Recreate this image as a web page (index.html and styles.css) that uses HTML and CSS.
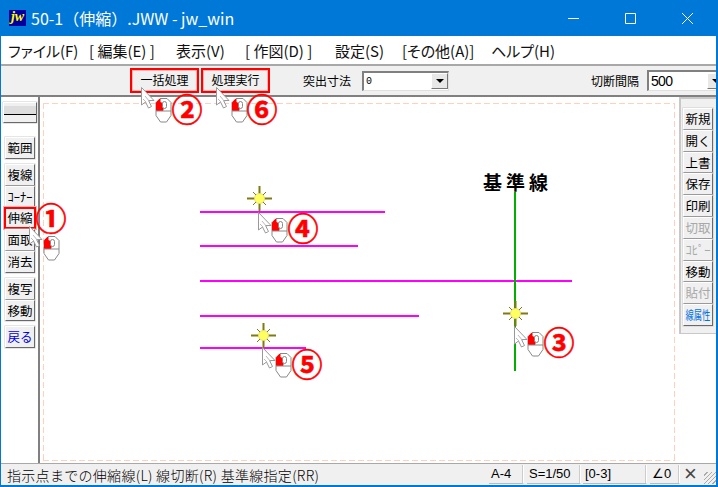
FILE: index.html
```html
<html lang="en">
<head>
    <meta charset="UTF-8">
    <title>50-1（伸縮）.JWW - jw_win</title>
    <link rel="stylesheet" href="styles.css">
</head>
<body>
    <div class="window">
        <div class="titlebar">
            <span class="app-icon">jw</span>
            <span class="title">50-1（伸縮）.JWW - jw_win</span>
            <div class="win-btns">
                <svg width="57" height="36" viewBox="0 0 57 36"><path d="M23 18.500h11" stroke="#fff" fill="none"/></svg>
                <svg width="57" height="36" viewBox="0 0 57 36"><path d="M23.500 13.500h10v10h-10z" stroke="#fff" fill="none"/></svg>
                <svg width="57" height="36" viewBox="0 0 57 36"><path d="M23 13l11 11M34 13l-11 11" stroke="#fff" fill="none"/></svg>
            </div>
        </div>
        <div class="menubar">
            <span class="m1">ファイル(F)</span>
            <span class="m2">[ 編集(E) ]</span>
            <span class="m3">表示(V)</span>
            <span class="m4">[ 作図(D) ]</span>
            <span class="m5">設定(S)</span>
            <span class="m6">[その他(A)]</span>
            <span class="m7">ヘルプ(H)</span>
        </div>
        <div class="toolbar">
            <div class="tool-btn first">一括処理</div>
            <div class="tool-btn">処理実行</div>
            <span class="tool-lbl lbl1">突出寸法</span>
            <div class="combo small"><span>0</span><i class="arrow"></i></div>
            <span class="tool-lbl lbl2">切断間隔</span>
            <div class="combo big"><span>500</span><i class="arrow"></i></div>
        </div>
        <div class="main">
            <div class="left-col">
                <div class="btn line-btn"><i></i></div>
                <div class="btn gap1">範囲</div>
                <div class="btn gap2">複線</div>
                <div class="btn">ｺｰﾅｰ</div>
                <div class="btn active">伸縮</div>
                <div class="btn">面取</div>
                <div class="btn">消去</div>
                <div class="btn gap2">複写</div>
                <div class="btn">移動</div>
                <div class="btn gap2 blue">戻る</div>
            </div>
            <div class="canvas"><div class="dashes"></div></div>
            <div class="right-col">
                <div class="right-btns">
                    <div class="btn">新規</div>
                    <div class="btn">開く</div>
                    <div class="btn">上書</div>
                    <div class="btn">保存</div>
                    <div class="btn">印刷</div>
                    <div class="btn off">切取</div>
                    <div class="btn off">ｺﾋﾟｰ</div>
                    <div class="btn">移動</div>
                    <div class="btn off">貼付</div>
                    <div class="btn blue2"><span class="squeeze">線属性</span></div>
                </div>
            </div>
        </div>
        <div class="statusbar">
            <span class="status-msg">指示点までの伸縮線(L) 線切断(R) 基準線指定(RR)</span>
            <span class="cell c1">A-4</span>
            <span class="cell c2">S=1/50</span>
            <span class="cell c3">[0-3]</span>
            <span class="cell c4">∠0</span>
            <span class="cell c5">×</span>
        </div>

        <!-- drawing and the step marks sit over everything -->
        <svg class="marks" width="718" height="487" viewBox="0 0 718 487">
            <defs>
                <g id="cursor">
                    <path d="M0.500 0.500V18l4-3 3 6 3-1.500-3-6h5.500z" fill="#fff" stroke="#999"/>
                    <path d="M4 9l5 6M2 12l3 3" stroke="#bbb" fill="none"/>
                </g>
                <g id="mouse">
                    <path d="M5 .5h7l4 4v13l-4.500 6.500h-6L1 17.500v-13z" fill="#fff" stroke="#888"/>
                    <path d="M5 1v3.500l3 1v7H1.500v-8z" fill="#f00" stroke="#f00"/>
                    <path d="M1 13h15" stroke="#888"/>
                    <rect x="7.500" y="3.500" width="4" height="7" rx="2" fill="#fff" stroke="#888"/>
                </g>
                <g id="spark">
                    <path d="M-12 .5H13M.5-12V13" stroke="#807a10" stroke-width="2"/>
                    <path d="M-6-6L7 7M7-6L-6 7" stroke="#807a10"/>
                    <circle cx=".5" cy=".5" r="5" fill="#ffff60" stroke="#e8e070"/>
                </g>
            </defs>
            <path class="pink" d="M200 212h185M200 246h158M200 281h372M200 316h219M200 348h106"/>
            <path class="green" d="M515 192v179"/>
            <text class="kijun" x="483" y="190">基準線</text>
            <use href="#spark" x="259" y="198"/>
            <use href="#spark" x="515" y="313"/>
            <use href="#spark" x="263" y="335"/>
            <use href="#cursor" x="141" y="87"/>
            <use href="#cursor" x="216" y="87"/>
            <use href="#cursor" x="29" y="226"/>
            <use href="#cursor" x="258" y="212"/>
            <use href="#cursor" x="514" y="326"/>
            <use href="#cursor" x="262" y="347"/>
            <use href="#mouse" x="155" y="98"/>
            <use href="#mouse" x="231" y="98"/>
            <use href="#mouse" x="43" y="236"/>
            <use href="#mouse" x="271" y="218"/>
            <use href="#mouse" x="527" y="332"/>
            <use href="#mouse" x="275" y="353"/>
            <text class="num" x="187" y="121">②</text>
            <text class="num" x="262" y="121">⑥</text>
            <text class="num" x="51" y="230">①</text>
            <text class="num" x="303" y="240">④</text>
            <text class="num" x="559" y="354">③</text>
            <text class="num" x="307" y="376">⑤</text>
        </svg>
    </div>
</body>
</html>
```

FILE: styles.css
```css
* {
    box-sizing: border-box;
    margin: 0;
}
body {
    background: #fff;
    font-family: "Noto Sans CJK JP", "Noto Sans", sans-serif;
    overflow: hidden;
}
.window {
    position: relative;
    width: 718px;
    height: 487px;
    display: flex;
    flex-direction: column;
    border: solid #0078d7;
    border-width: 0 2px 2px 1px;
    overflow: hidden;
}
.titlebar {
    height: 36px;
    flex: none;
    background: #0078d7;
    color: #fff;
    display: flex;
    align-items: center;
    padding-left: 8px;
}
.app-icon {
    width: 17px;
    height: 16px;
    background: #0000a0;
    color: #ff0;
    font: italic bold 14px/14px "Liberation Serif", serif;
    text-align: center;
}
.title {
    margin-left: 5px;
    font-size: 16px;
    line-height: 36px;
}
.win-btns {
    margin-left: auto;
    display: flex;
}
.menubar {
    height: 28px;
    flex: none;
    display: flex;
    align-items: center;
    background: #fff;
    font-size: 15px;
    color: #111;
    white-space: nowrap;
    font-feature-settings: "palt";
}
.menubar span { flex: none; }
.m1 { margin-left: 7px; width: 81px; }
.m2 { width: 87px; }
.m3 { width: 69px; }
.m4 { width: 90px; }
.m5 { width: 67px; }
.m6 { width: 89px; }
.toolbar {
    height: 33px;
    flex: none;
    background: #f0f0f0;
    border-top: 2px solid #a8a8a8;
    border-bottom: 2px solid #808080;
    display: flex;
    align-items: center;
    white-space: nowrap;
    overflow: hidden;
}
.toolbar > * { flex: none; }
.tool-btn {
    width: 69px;
    height: 25px;
    margin-left: 2px;
    border: 2px solid #f00;
    box-shadow: inset 0 0 0 1px #ffb0b0;
    background: #f0f0f0;
    font-size: 12px;
    line-height: 19px;
    text-align: center;
}
.toolbar .first { margin-left: 129px; }
.tool-lbl { font-size: 12px; }
.lbl1 { margin-left: 33px; width: 59px; }
.lbl2 { margin-left: 142px; width: 56px; }
.combo {
    height: 20px;
    display: flex;
    align-items: center;
    background: #fff;
    border: 1px solid #e0e0e0;
    border-left: 2px solid #808080;
    border-top: 2px solid #808080;
    padding-left: 2px;
    font: 10px "Liberation Mono", monospace;
}
.combo.small { width: 87px; }
.combo.big {
    width: 78px;
    height: 21px;
    font: 14px "Liberation Sans", sans-serif;
    letter-spacing: -.7px;
}
.combo .arrow {
    width: 17px;
    height: 16px;
    margin-left: auto;
    background: #e8e8e8;
    border: 1px solid #fff;
    border-right-color: #777;
    border-bottom-color: #777;
    position: relative;
}
.combo .arrow::after {
    content: "";
    position: absolute;
    left: 4px;
    top: 5px;
    border: 4px solid transparent;
    border-top: 4px solid #000;
    border-bottom: 0;
}
.main {
    flex: 1;
    display: flex;
    min-height: 0;
}
.left-col {
    width: 39px;
    flex: none;
    background: #fff;
    padding: 5px 0 0 4px;
    display: flex;
    flex-direction: column;
    border-right: 2px solid #808080;
}
.btn {
    width: 30px;
    height: 21.800px;
    flex: none;
    background: #f0f0f0;
    border: 1px solid;
    border-color: #fff #696969 #696969 #fff;
    box-shadow: 0 0 0 .5px #ccc;
    font-size: 12.500px;
    line-height: 19px;
    text-align: center;
    white-space: nowrap;
    color: #000;
    overflow: hidden;
}
.left-col .line-btn {
    width: 34px;
    height: 21px;
    margin-left: -2px;
    padding-top: 3px;
}
.line-btn i {
    display: block;
    height: 9px;
    background: #ddd;
    border-bottom: 1px solid #000;
}
.gap1 { margin-top: 14px; }
.gap2 { margin-top: 5px; }
.left-col .active {
    width: 32px;
    margin-left: -1px;
    border: 2px solid #f00;
    box-shadow: 0 0 0 1px #ffb0b0;
    line-height: 17px;
}
.blue { color: #0000e0; }
.blue2 { color: #0070e0; }
.squeeze {
    display: inline-block;
    transform: scaleX(.66);
    margin: 0 -10px;
}
.off { color: #a8a8a8; }
.canvas {
    width: 639px;
    flex: none;
    background: #fff;
    padding: 6px 4px 2px 3px;
}
/* hand drawn dash pattern, a css dashed border is too short */
.dashes {
    height: 100%;
    background:
        repeating-linear-gradient(90deg, #ffcfc0 0 6px, transparent 6px 9px) top / 100% 1px no-repeat,
        repeating-linear-gradient(90deg, #ffcfc0 0 6px, transparent 6px 9px) bottom / 100% 1px no-repeat,
        repeating-linear-gradient(#ffcfc0 0 6px, transparent 6px 9px) left / 1px 100% no-repeat,
        repeating-linear-gradient(#ffcfc0 0 6px, transparent 6px 9px) right / 1px 100% no-repeat;
}
.right-col {
    flex: 1;
    background: #fff;
}
.right-btns {
    height: 237px;
    background: #f0f0f0;
    border-left: 2px solid #c8c8c8;
    border-top: 2px solid #c8c8c8;
    border-bottom: 1px solid #c8c8c8;
    padding: 9px 0 0 2px;
    display: flex;
    flex-direction: column;
}
.statusbar {
    height: 22px;
    flex: none;
    background: #f0f0f0;
    border-top: 1px solid #a8a8a8;
    display: flex;
    align-items: center;
    font-size: 14px;
    color: #000;
    white-space: nowrap;
}
.status-msg {
    margin-left: 6px;
    width: 482px;
    font-weight: 300;
    letter-spacing: .3px;
}
.cell {
    height: 19px;
    background: #f0f0f0;
    border-right: 1px solid #fff;
    border-bottom: 1px solid #bbb;
    box-shadow: inset -1px 0 #ccc;
    font-size: 13px;
    line-height: 18px;
    padding-left: 2px;
    font-family: "Liberation Sans", sans-serif;
    flex: none;
}
.c1 { width: 35px; margin-right: 3px; }
.c2 { width: 54px; margin-right: 2px; }
.c3 { width: 64px; margin-right: 3px; }
.c4 { width: 30px; margin-right: 2px; }
.c5 {
    width: 34px;
    border: 0;
    box-shadow: none;
    color: #444;
    font-size: 22px;
    line-height: 17px;
    background: repeating-linear-gradient(135deg, #f0f0f0 0 2px, #aaa 2px 3px) right bottom / 12px 12px no-repeat;
}
.marks {
    position: absolute;
    left: -1px;
    top: 0;
    pointer-events: none;
}
.pink {
    stroke: #ff00ff;
    stroke-width: 2;
    fill: none;
}
.green {
    stroke: #00b000;
    stroke-width: 2;
    fill: none;
}
.kijun {
    font-size: 19px;
    font-weight: bold;
    letter-spacing: 4px;
    fill: #000;
}
.num {
    font-size: 31px;
    font-weight: bold;
    fill: #f00;
    stroke: #f00;
    stroke-width: .6;
    text-anchor: middle;
}
```
